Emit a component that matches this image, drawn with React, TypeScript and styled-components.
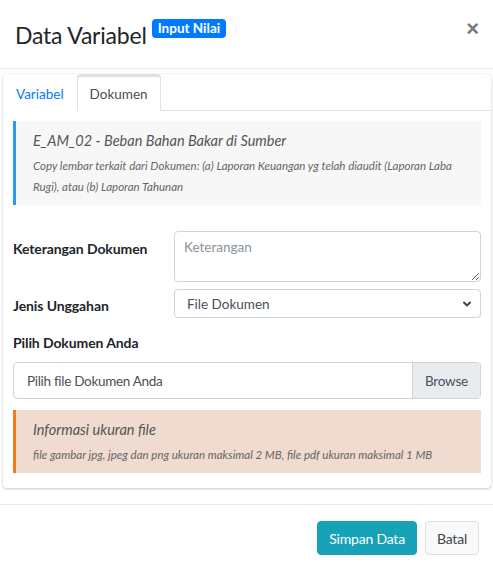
import React, { useState } from 'react';
import styled, { createGlobalStyle } from 'styled-components';
import { ChevronDown } from 'lucide-react';

const GlobalStyle = createGlobalStyle`
  * { box-sizing: border-box; }
  body {
    margin: 0;
    background: #fff;
    font-family: Lato, "Noto Sans", sans-serif;
    color: #212529;
  }
`;

const Modal = styled.div`
  width: 493px;
  background: #fff;
`;

const Header = styled.div`
  display: flex;
  align-items: flex-start;
  justify-content: space-between;
  height: 69px;
  padding: 20px 14px 0 15px;
  border-bottom: 1px solid #e9ecef;
`;

const Title = styled.h4`
  margin: 0;
  display: flex;
  align-items: flex-start;
  gap: 5px;
  font-size: 23px;
  letter-spacing: -0.2px;
  font-weight: 400;
  line-height: 30px;
  color: #212529;
`;

const Badge = styled.span`
  margin-top: -1px;
  padding: 2px 6px 3px;
  border-radius: 4px;
  background: #007bff;
  color: #fff;
  font-size: 13.5px;
  letter-spacing: 0;
  font-weight: 700;
  line-height: 14px;
`;

const Close = styled.button`
  border: 0;
  background: none;
  padding: 0;
  margin-top: -1px;
  color: #7a7a7a;
  font-size: 22px;
  font-weight: 700;
  line-height: 20px;
  font-family: "Liberation Sans", sans-serif;
  cursor: pointer;
`;

const Body = styled.div`
  padding: 5px 2px 16px 3px;
`;

const Card = styled.div`
  border-radius: 4px;
  box-shadow: 0 0 1px rgba(0, 0, 0, 0.15), 0 1px 3px rgba(0, 0, 0, 0.2);
  background: #fff;
`;

const Tabs = styled.div`
  display: flex;
  height: 37px;
  border-bottom: 1px solid #dee2e6;
`;

const Tab = styled.button<{ $active?: boolean }>`
  margin-bottom: -1px;
  padding: 0 12px;
  height: 37px;
  font-family: inherit;
  font-size: 13.5px;
  background: #fff;
  cursor: pointer;
  color: ${p => (p.$active ? '#495057' : '#007bff')};
  border: 1px solid ${p => (p.$active ? '#dee2e6' : 'transparent')};
  border-top: ${p => (p.$active ? '3px solid #dee2e6' : '1px solid transparent')};
  border-bottom-color: ${p => (p.$active ? '#fff' : 'transparent')};
  border-radius: 4px 4px 0 0;
  padding-top: ${p => (p.$active ? '0' : '2px')};
`;

const CardBody = styled.div`
  padding: 10px 10px 15px;
`;

const Callout = styled.div<{ $tone: 'info' | 'warning' }>`
  padding: 10px 16px 8px 17px;
  border-left: 3px solid ${p => (p.$tone === 'info' ? '#2a9bf0' : '#f47a1f')};
  background: ${p => (p.$tone === 'info' ? '#f7f7f7' : '#efdbcf')};
  font-style: italic;
`;

const CalloutTitle = styled.div`
  font-size: 14.5px;
  line-height: 20px;
  color: #555;
`;

const CalloutText = styled.p`
  margin: 4px 0 0;
  font-size: 11.5px;
  line-height: 21px;
  color: #666;
`;

const Form = styled.div`
  display: flex;
  flex-direction: column;
  margin-top: 26px;
`;

const Row = styled.div`
  display: grid;
  grid-template-columns: 161px 1fr;
  align-items: start;
  margin-bottom: 7px;
`;

const Label = styled.label<{ $pad?: number }>`
  padding-top: ${p => p.$pad ?? 8}px;
  font-size: 14px;
  letter-spacing: -0.1px;
  font-weight: 700;
  line-height: 20px;
`;

const TextArea = styled.textarea`
  width: 100%;
  height: 51px;
  padding: 5px 9px;
  border: 1px solid #ced4da;
  border-radius: 4px;
  font-family: inherit;
  font-size: 13.5px;
  line-height: 20px;
  color: #495057;
  &::placeholder { color: #8a939b; }
`;

const SelectWrap = styled.div`
  position: relative;
`;

const Select = styled.select`
  appearance: none;
  width: 100%;
  height: 29px;
  padding: 0 12px;
  border: 1px solid #ced4da;
  border-radius: 4px;
  background: #fff;
  font-family: inherit;
  font-size: 13.5px;
  color: #495057;
`;

const Chevron = styled(ChevronDown)`
  position: absolute;
  right: 8px;
  top: 9px;
  color: #444;
  pointer-events: none;
`;

const FileLabel = styled.label`
  display: block;
  font-size: 14px;
  letter-spacing: -0.1px;
  font-weight: 700;
  line-height: 20px;
  margin: 8px 0 9px;
`;

const FileInput = styled.div`
  display: flex;
  height: 37px;
  border: 1px solid #ced4da;
  border-radius: 4px;
  overflow: hidden;
  margin-bottom: 11px;
`;

const FileName = styled.div`
  flex: 1;
  display: flex;
  align-items: center;
  padding: 0 13px;
  font-size: 13.5px;
  letter-spacing: -0.3px;
  color: #495057;
`;

const Browse = styled.div`
  display: flex;
  align-items: center;
  padding: 0 12px;
  border-left: 1px solid #ced4da;
  background: #e9ecef;
  font-size: 13.5px;
  letter-spacing: -0.2px;
  color: #495057;
`;

const Footer = styled.div`
  display: flex;
  justify-content: flex-end;
  gap: 8px;
  padding: 16px 14px 0;
  border-top: 1px solid #e9ecef;
`;

const Button = styled.button<{ $primary?: boolean }>`
  height: 34px;
  padding: 0 11px;
  border-radius: 4px;
  font-family: inherit;
  font-size: 14px;
  letter-spacing: -0.2px;
  cursor: pointer;
  color: ${p => (p.$primary ? '#fff' : '#444')};
  background: ${p => (p.$primary ? '#17a2b8' : '#f8f9fa')};
  border: 1px solid ${p => (p.$primary ? '#17a2b8' : '#ddd')};
`;

export default function App() {
  const [tab, setTab] = useState('dokumen');
  return (
    <Modal>
      <GlobalStyle />
      <Header>
        <Title>
          Data Variabel <Badge>Input Nilai</Badge>
        </Title>
        <Close>×</Close>
      </Header>
      <Body>
        <Card>
          <Tabs>
            <Tab $active={tab === 'variabel'} onClick={() => setTab('variabel')}>Variabel</Tab>
            <Tab $active={tab === 'dokumen'} onClick={() => setTab('dokumen')}>Dokumen</Tab>
          </Tabs>
          <CardBody>
            <Callout $tone="info">
              <CalloutTitle>E_AM_02 - Beban Bahan Bakar di Sumber</CalloutTitle>
              <CalloutText>
                Copy lembar terkait dari Dokumen: (a) Laporan Keuangan yg telah diaudit (Laporan Laba
                Rugi), atau (b) Laporan Tahunan
              </CalloutText>
            </Callout>
            <Form>
              <Row>
                <Label $pad={8}>Keterangan Dokumen</Label>
                <TextArea placeholder="Keterangan" />
              </Row>
              <Row>
                <Label $pad={7}>Jenis Unggahan</Label>
                <SelectWrap>
                  <Select defaultValue="file">
                    <option value="file">File Dokumen</option>
                    <option value="link">Link Dokumen</option>
                  </Select>
                  <Chevron size={12} strokeWidth={4} />
                </SelectWrap>
              </Row>
              <FileLabel>Pilih Dokumen Anda</FileLabel>
              <FileInput>
                <FileName>Pilih file Dokumen Anda</FileName>
                <Browse>Browse</Browse>
              </FileInput>
              <Callout $tone="warning">
                <CalloutTitle>Informasi ukuran file</CalloutTitle>
                <CalloutText>
                  file gambar jpg, jpeg dan png ukuran maksimal 2 MB, file pdf ukuran maksimal 1 MB
                </CalloutText>
              </Callout>
            </Form>
          </CardBody>
        </Card>
      </Body>
      <Footer>
        <Button $primary>Simpan Data</Button>
        <Button>Batal</Button>
      </Footer>
    </Modal>
  );
}
